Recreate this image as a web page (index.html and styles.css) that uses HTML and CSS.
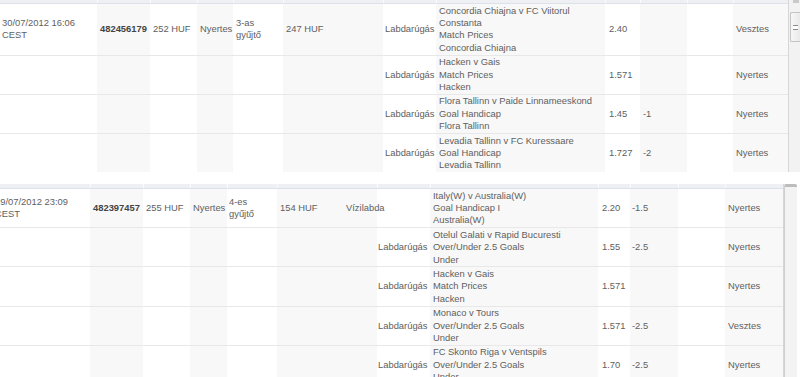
FILE: index.html
```html
<!DOCTYPE html>
<html lang="hu">
<head>
<meta charset="utf-8">
<title>Fogadások</title>
<link rel="stylesheet" href="styles.css">
</head>
<body>
<div class="win win-top">
  <div class="pane">
    <table class="bets bets-top">
      <colgroup>
        <col class="c-date"><col class="c-id sh"><col class="c-stake"><col class="c-status sh"><col class="c-type"><col class="c-ret sh"><col class="c-sport"><col class="c-event sh"><col class="c-odds"><col class="c-hcp sh"><col class="c-empty"><col class="c-res sh">
      </colgroup>
      <thead>
        <tr class="head"><th></th><th></th><th></th><th></th><th></th><th></th><th></th><th></th><th></th><th></th><th></th><th></th></tr>
      </thead>
      <tbody>
        <tr>
          <td class="date">30/07/2012 16:06<br>CEST</td>
          <td class="id">482456179</td>
          <td>252 HUF</td>
          <td>Nyertes</td>
          <td>3-as<br>gyűjtő</td>
          <td class="ret">247 HUF</td>
          <td class="sport">Labdarúgás</td>
          <td class="event">Concordia Chiajna v FC Viitorul<br>Constanta<br>Match Prices<br>Concordia Chiajna</td>
          <td class="odds">2.40</td>
          <td></td>
          <td></td>
          <td>Vesztes</td>
        </tr>
        <tr>
          <td></td><td></td><td></td><td></td><td></td><td></td>
          <td class="sport">Labdarúgás</td>
          <td class="event">Hacken v Gais<br>Match Prices<br>Hacken</td>
          <td class="odds">1.571</td>
          <td></td>
          <td></td>
          <td>Nyertes</td>
        </tr>
        <tr>
          <td></td><td></td><td></td><td></td><td></td><td></td>
          <td class="sport">Labdarúgás</td>
          <td class="event">Flora Tallinn v Paide Linnameeskond<br>Goal Handicap<br>Flora Tallinn</td>
          <td class="odds">1.45</td>
          <td>-1</td>
          <td></td>
          <td>Nyertes</td>
        </tr>
        <tr>
          <td></td><td></td><td></td><td></td><td></td><td></td>
          <td class="sport">Labdarúgás</td>
          <td class="event">Levadia Tallinn v FC Kuressaare<br>Goal Handicap<br>Levadia Tallinn</td>
          <td class="odds">1.727</td>
          <td>-2</td>
          <td></td>
          <td>Nyertes</td>
        </tr>
      </tbody>
    </table>
  </div>
  <div class="sbar">
    <div class="arrow"></div>
    <div class="thumb"><span class="grip"></span></div>
  </div>
</div>

<div class="win win-bottom">
  <div class="pane">
    <table class="bets bets-bottom">
      <colgroup>
        <col class="d-date"><col class="d-id sh"><col class="d-stake"><col class="d-status sh"><col class="d-type"><col class="d-ret sh"><col class="d-sport"><col class="d-event sh"><col class="d-odds"><col class="d-hcp sh"><col class="d-empty"><col class="d-res sh">
      </colgroup>
      <thead>
        <tr class="head"><th></th><th></th><th></th><th></th><th></th><th></th><th></th><th></th><th></th><th></th><th></th><th></th></tr>
      </thead>
      <tbody>
        <tr>
          <td class="date">29/07/2012 23:09<br>CEST</td>
          <td class="id">482397457</td>
          <td>255 HUF</td>
          <td>Nyertes</td>
          <td class="type">4-es<br>gyűjtő</td>
          <td class="ret">154 HUF</td>
          <td class="sport"><span class="sport-shift">Vízilabda</span></td>
          <td class="event">Italy(W) v Australia(W)<br>Goal Handicap I<br>Australia(W)</td>
          <td class="odds">2.20</td>
          <td class="hcp">-1.5</td>
          <td></td>
          <td>Nyertes</td>
        </tr>
        <tr>
          <td></td><td></td><td></td><td></td><td></td><td></td>
          <td class="sport">Labdarúgás</td>
          <td class="event">Otelul Galati v Rapid Bucuresti<br>Over/Under 2.5 Goals<br>Under</td>
          <td class="odds">1.55</td>
          <td class="hcp">-2.5</td>
          <td></td>
          <td>Nyertes</td>
        </tr>
        <tr>
          <td></td><td></td><td></td><td></td><td></td><td></td>
          <td class="sport">Labdarúgás</td>
          <td class="event">Hacken v Gais<br>Match Prices<br>Hacken</td>
          <td class="odds">1.571</td>
          <td class="hcp"></td>
          <td></td>
          <td>Nyertes</td>
        </tr>
        <tr>
          <td></td><td></td><td></td><td></td><td></td><td></td>
          <td class="sport">Labdarúgás</td>
          <td class="event">Monaco v Tours<br>Over/Under 2.5 Goals<br>Under</td>
          <td class="odds">1.571</td>
          <td class="hcp">-2.5</td>
          <td></td>
          <td>Vesztes</td>
        </tr>
        <tr>
          <td></td><td></td><td></td><td></td><td></td><td></td>
          <td class="sport">Labdarúgás</td>
          <td class="event">FC Skonto Riga v Ventspils<br>Over/Under 2.5 Goals<br>Under</td>
          <td class="odds">1.70</td>
          <td class="hcp">-2.5</td>
          <td></td>
          <td>Nyertes</td>
        </tr>
      </tbody>
    </table>
  </div>
  <div class="sbar">
    <div class="thumb"></div>
  </div>
  <div class="edge"></div>
</div>
</body>
</html>
```

FILE: styles.css
```css
html, body {
  margin: 0;
  padding: 0;
  background: #fff;
}
body {
  width: 800px;
  height: 377px;
  overflow: hidden;
  font-family: "Liberation Sans", Arial, sans-serif;
  font-size: 9.4px;
  line-height: 12.4px;
  color: #606060;
}

.win {
  display: flex;
  overflow: hidden;
}
.win-top {
  width: 800px;
  height: 172px;
}
.win-bottom {
  width: 807px;
  height: 193px;
  margin-top: 12px;
  margin-left: -7px;
}

.pane {
  overflow: hidden;
}
.win-top .pane { width: 788px; }
.win-bottom .pane { width: 790px; }

.bets {
  border-collapse: collapse;
  table-layout: fixed;
  width: 100%;
}
.bets col.sh { background: #f8f8f8; }

.bets .head th {
  height: 3px;
  padding: 0;
  background: #eef0f3;
  border-right: 1px solid #fafbfc;
  border-bottom: 1px solid #dde2ea;
}
.bets-bottom .head th { height: 4px; }

.bets td {
  padding: 0.5px 3px;
  border-bottom: 1px solid #e8e8e8;
  vertical-align: middle;
  white-space: nowrap;
  overflow: visible;
}
.bets td.date { padding-left: 2px; }
.bets td.id { font-weight: bold; color: #444; }
.bets td.sport { padding-left: 2px; padding-right: 0; }
.bets td.odds { padding-left: 4px; }
.bets-bottom td.type { padding-left: 2px; }
.bets-bottom td.hcp { padding-left: 2px; }
.bets-bottom td.sport { padding-left: 1px; }
.sport-shift { display: inline-block; margin-left: -32px; }

/* top table columns */
.c-date { width: 97px; }
.c-id { width: 53px; }
.c-stake { width: 47px; }
.c-status { width: 36px; }
.c-type { width: 50px; }
.c-ret { width: 100px; }
.c-sport { width: 53px; }
.c-event { width: 169px; }
.c-odds { width: 35px; }
.c-hcp { width: 47px; }
.c-empty { width: 46px; }
.c-res { width: 55px; }

/* bottom table columns */
.d-date { width: 97px; }
.d-id { width: 53px; }
.d-stake { width: 47px; }
.d-status { width: 37px; }
.d-type { width: 50px; }
.d-ret { width: 100px; }
.d-sport { width: 53px; }
.d-event { width: 168px; }
.d-odds { width: 32px; }
.d-hcp { width: 48px; }
.d-empty { width: 47px; }
.d-res { width: 58px; }

/* scrollbars */
.sbar {
  box-sizing: border-box;
  border-left: 1px solid #d6d6d6;
  background: #f2f2f2;
  display: flex;
  flex-direction: column;
  align-items: flex-end;
}
.win-top .sbar {
  width: 12px;
  height: 172px;
}
.win-top .arrow {
  width: 6px;
  height: 3px;
  margin: 0 1px 0 0;
  background: #c9c9c9;
}
.win-top .thumb {
  box-sizing: border-box;
  width: 10px;
  height: 30px;
  margin-top: 9px;
  border: 1px solid #c4c4c4;
  border-right: 0;
  border-radius: 2px 0 0 2px;
  background: linear-gradient(90deg, #f7f7f7, #e9e9e9);
  display: flex;
  align-items: center;
  justify-content: center;
}
.grip {
  display: block;
  width: 5px;
  border-top: 1px solid #8a8a8a;
  border-bottom: 1px solid #8a8a8a;
  background: linear-gradient(#fff 0 1.5px, #8a8a8a 1.5px 2.5px, #fff 2.5px);
  box-sizing: content-box;
  height: 3px;
}
.win-bottom .sbar {
  width: 14px;
  height: 193px;
  background: #f4f4f4;
}
.win-bottom .thumb {
  box-sizing: border-box;
  width: 13px;
  height: 193px;
  border-top: 3px solid #bdbdbd;
  border-left: 1px solid #cfcfcf;
  border-radius: 2px 2px 0 0;
  background: #f3f3f3;
}
.win-bottom .edge {
  width: 3px;
  background: #fff;
}
```
